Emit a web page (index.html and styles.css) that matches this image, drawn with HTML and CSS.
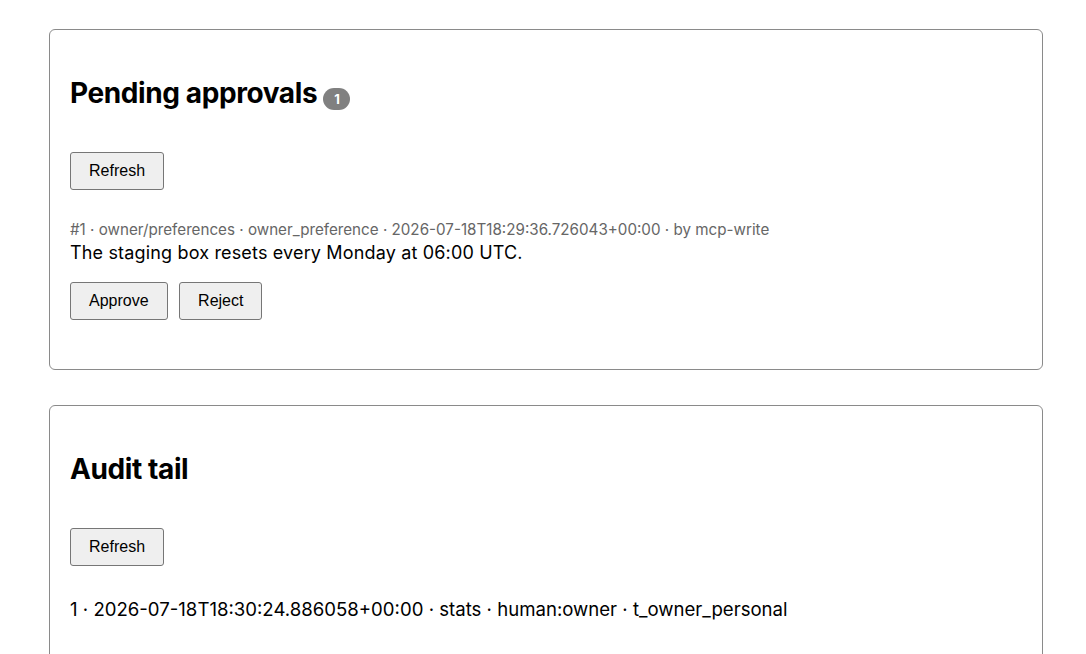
FILE: index.html
```html
<!DOCTYPE html>
<html lang="en">
<head>
    <meta charset="UTF-8">
    <meta name="viewport" content="width=device-width, initial-scale=1.0">
    <title>Owner console</title>
    <link rel="stylesheet" href="styles.css">
</head>
<body>
    <section class="panel">
        <h2>Pending approvals <span class="badge">1</span></h2>
        <div class="toolbar">
            <button class="btn">Refresh</button>
        </div>
        <div class="item">
            <div class="meta">#1 · owner/preferences · owner_preference · 2026-07-18T18:29:36.726043+00:00 · by mcp-write</div>
            <div class="body">The staging box resets every Monday at 06:00 UTC.</div>
            <div class="actions">
                <button class="btn">Approve</button>
                <button class="btn">Reject</button>
            </div>
        </div>
    </section>

    <section class="panel">
        <h2>Audit tail</h2>
        <div class="toolbar">
            <button class="btn">Refresh</button>
        </div>
        <ul class="audit">
            <li>1 · 2026-07-18T18:30:24.886058+00:00 · stats · human:owner · t_owner_personal</li>
        </ul>
    </section>
</body>
</html>
```

FILE: styles.css
```css
body {
    font-family: Inter, "Noto Sans", sans-serif;
    margin: 0;
    padding: 29px 43px 0 49px;
    background: #fff;
    color: #000;
}
.panel {
    border: 1px solid #8a8a8a;
    border-radius: 6px;
    padding: 20px;
    margin-bottom: 35px;
}
h2 {
    font-size: 28px;
    font-weight: 700;
    margin: 26px 0 42px;
    letter-spacing: -0.4px;
}
.badge {
    display: inline-block;
    vertical-align: -1px;
    background: #808080;
    color: #fff;
    font-size: 13px;
    font-weight: 700;
    letter-spacing: 0;
    line-height: 22px;
    min-width: 27px;
    text-align: center;
    border-radius: 11px;
}
.toolbar {
    margin-bottom: 30px;
}
.btn {
    font-family: "Liberation Sans", Arial, sans-serif;
    font-size: 16px;
    line-height: 18px;
    color: #000;
    background: #efefef;
    border: 1px solid #767676;
    border-radius: 3px;
    padding: 9px 18px;
    margin-right: 7px;
}
.meta {
    font-size: 15.2px;
    color: #666;
    line-height: 20px;
}
.body {
    font-size: 18px;
    letter-spacing: 0.16px;
    line-height: 26px;
    margin-bottom: 16px;
}
.actions {
    margin-bottom: 29px;
}
.audit {
    list-style: none;
    margin: 0 0 20px;
    padding: 0;
    font-size: 18.6px;
    line-height: 26px;
}
```
